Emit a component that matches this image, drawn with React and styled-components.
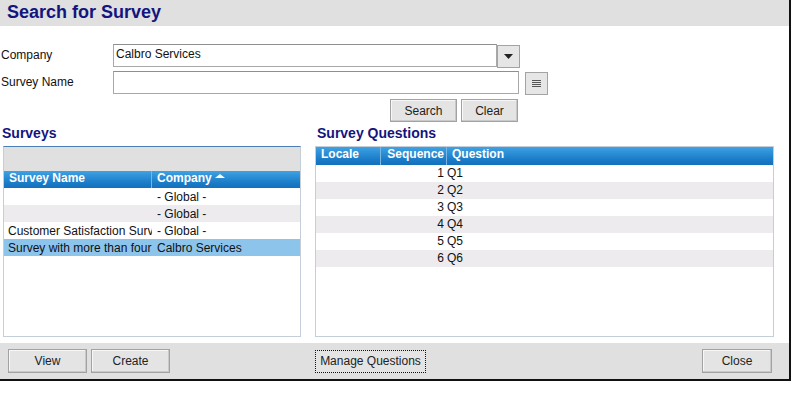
import React from "react";
import styled, { createGlobalStyle } from "styled-components";

const GlobalStyle = createGlobalStyle`
  body {
    margin: 0;
    background: #ffffff;
    font-family: "Liberation Sans", Arial, sans-serif;
    font-size: 12px;
    color: #111;
  }
`;

const Dialog = styled.div`
  box-sizing: border-box;
  width: 791px;
  height: 381px;
  border-right: 2px solid #111;
  border-bottom: 2px solid #111;
  display: flex;
  flex-direction: column;
  background: #fff;
`;

const TitleBar = styled.div`
  height: 26px;
  flex: none;
  background: #dfe0df;
  padding-left: 7px;
  font-size: 18px;
  font-weight: bold;
  line-height: 24px;
  color: #14147e;
`;

const Form = styled.div`
  display: grid;
  grid-template-columns: 113px 407px auto;
  grid-template-rows: 23px 24px 23px;
  row-gap: 4px;
  margin-top: 18px;
  align-items: start;
`;

const Label = styled.div`
  line-height: 23px;
  padding-left: 1px;
`;

const Field = styled.div`
  display: flex;
  width: ${(p) => p.width}px;
`;

const TextBox = styled.div`
  box-sizing: border-box;
  flex: 1;
  height: 23px;
  border: 1px solid #a8a8a8;
  border-top-color: #8f8f8f;
  background: #fff;
  padding: 2px 2px 0;
  line-height: 15px;
  white-space: nowrap;
`;

const DropButton = styled.div`
  box-sizing: border-box;
  width: 23px;
  height: 23px;
  margin-top: 1px;
  background: #e6e6e6;
  border: 1px solid #a3a3a3;
  display: flex;
  align-items: center;
  justify-content: center;
`;

const IconButton = styled(DropButton)`
  margin-left: 5px;
`;

const Actions = styled.div`
  grid-column: 2;
  display: flex;
  justify-content: flex-end;
  gap: 4px;
  padding-right: 2px;
`;

const Button = styled.div`
  box-sizing: border-box;
  width: ${(p) => p.width}px;
  height: ${(p) => p.h || 23}px;
  background: #e4e4e4;
  border: 1px solid ${(p) => (p.focused ? "#111" : "#a2a2a2")};
  border-style: ${(p) => (p.focused ? "dotted" : "solid")};
  box-shadow: ${(p) =>
    p.focused ? "none" : "inset -1px -1px 0 #c9c9c9, inset 1px 1px 0 #f7f7f7"};
  display: flex;
  align-items: center;
  justify-content: center;
  font-size: 12px;
  color: #222;
`;

const Headings = styled.div`
  height: 24px;
  display: grid;
  grid-template-columns: 315px 1fr;
  font-size: 14px;
  font-weight: bold;
  color: #14147e;
  line-height: 16px;
  padding-top: 3px;
  box-sizing: border-box;
`;

const Heading = styled.div`
  padding-left: ${(p) => p.indent}px;
`;

const Panels = styled.div`
  height: 191px;
  display: flex;
  padding-left: 3px;
  gap: 14px;
`;

const Panel = styled.div`
  box-sizing: border-box;
  width: ${(p) => p.width}px;
  height: 100%;
  border: 1px solid #c3ced8;
  border-top-color: ${(p) => p.topColor || "#c3ced8"};
  overflow: hidden;
  background: #fff;
`;

const FilterBand = styled.div`
  height: 24px;
  background: #dfe0df;
`;

const HeaderRow = styled.div`
  display: grid;
  grid-template-columns: ${(p) => p.cols};
  height: ${(p) => p.h}px;
  background: linear-gradient(#3ea2e3, #1a7bc7 70%, #1470bd);
  color: #fff;
  font-weight: bold;
  font-size: 12px;
  line-height: ${(p) => p.h - 3}px;
`;

const HeaderCell = styled.div`
  padding: 0 ${(p) => (p.right ? 2 : 5)}px;
  border-right: ${(p) => (p.last ? "none" : "1px solid #78b6e4")};
  white-space: nowrap;
  overflow: hidden;
  display: flex;
  align-items: flex-start;
  justify-content: ${(p) => (p.right ? "flex-end" : "flex-start")};
  gap: 3px;
`;

const SortArrow = styled.span`
  width: 0;
  height: 0;
  margin-top: 3px;
  border-left: 5px solid transparent;
  border-right: 5px solid transparent;
  border-bottom: 4px solid #fff;
`;

const Row = styled.div`
  display: grid;
  grid-template-columns: ${(p) => p.cols};
  height: 17px;
  line-height: 17px;
  padding-top: ${(p) => p.pad || 0}px;
  box-sizing: border-box;
  background: ${(p) =>
    p.selected ? "#8cc4ec" : p.odd ? "#edebed" : "#ffffff"};
`;

const Cell = styled.div`
  padding: 0 ${(p) => (p.right ? 3 : 0)}px 0 ${(p) => (p.right ? 2 : p.left ?? 5)}px;
  text-align: ${(p) => (p.right ? "right" : "left")};
  white-space: nowrap;
  overflow: hidden;
`;

const Footer = styled.div`
  margin-top: 6px;
  height: 36px;
  background: #dfe0df;
  display: grid;
  grid-template-columns: 307px 1fr auto;
  align-items: center;
  padding: 0 17px 0 8px;
  box-sizing: border-box;
`;

const ButtonGroup = styled.div`
  display: flex;
  gap: 4px;
`;

// names are shown as the grid clips them
const surveys = [
  { name: "", company: "- Global -" },
  { name: "", company: "- Global -" },
  { name: "Customer Satisfaction Surv", company: "- Global -" },
  { name: "Survey with more than four", company: "Calbro Services", selected: true },
];

const questions = [1, 2, 3, 4, 5, 6];

const surveyCols = "148px 1fr";
const questionCols = "65px 66px 1fr";

export default function App() {
  return (
    <>
      <GlobalStyle />
      <Dialog>
        <TitleBar>Search for Survey</TitleBar>
        <Form>
          <Label>Company</Label>
          <Field width={407}>
            <TextBox>Calbro Services</TextBox>
            <DropButton>
              <svg width="9" height="5" viewBox="0 0 9 5">
                <path d="M0 0h9L4.5 5z" fill="#222" />
              </svg>
            </DropButton>
          </Field>
          <div />
          <Label>Survey Name</Label>
          <Field width={406}>
            <TextBox />
          </Field>
          <IconButton>
            <svg width="9" height="8" viewBox="0 0 9 8">
              <path d="M0 0.5h9M0 2.5h9M0 4.5h9M0 6.5h9" stroke="#555" strokeWidth="1.2" />
            </svg>
          </IconButton>
          <Actions>
            <Button width={67}>Search</Button>
            <Button width={57}>Clear</Button>
          </Actions>
        </Form>
        <Headings>
          <Heading indent={2}>Surveys</Heading>
          <Heading indent={2}>Survey Questions</Heading>
        </Headings>
        <Panels>
          <Panel width={298} topColor="#4a7fb6">
            <FilterBand />
            <HeaderRow cols={surveyCols} h={17}>
              <HeaderCell>Survey Name</HeaderCell>
              <HeaderCell last>
                Company
                <SortArrow />
              </HeaderCell>
            </HeaderRow>
            {surveys.map((s, i) => (
              <Row key={i} cols={surveyCols} odd={i % 2 === 1} selected={s.selected} pad={1}>
                <Cell left={4}>{s.name}</Cell>
                <Cell>{s.company}</Cell>
              </Row>
            ))}
          </Panel>
          <Panel width={459}>
            <HeaderRow cols={questionCols} h={18}>
              <HeaderCell>Locale</HeaderCell>
              <HeaderCell right>Sequence</HeaderCell>
              <HeaderCell last>Question</HeaderCell>
            </HeaderRow>
            {questions.map((n, i) => (
              <Row key={n} cols={questionCols} odd={i % 2 === 1}>
                <Cell />
                <Cell right>{n}</Cell>
                <Cell left={0}>Q{n}</Cell>
              </Row>
            ))}
          </Panel>
        </Panels>
        <Footer>
          <ButtonGroup>
            <Button width={79} h={24}>View</Button>
            <Button width={79} h={24}>Create</Button>
          </ButtonGroup>
          <Button width={111} h={23} focused>Manage Questions</Button>
          <Button width={70} h={24}>Close</Button>
        </Footer>
      </Dialog>
    </>
  );
}
